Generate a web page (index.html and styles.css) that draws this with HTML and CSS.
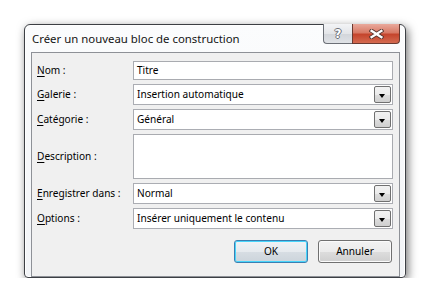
FILE: index.html
```html
<!DOCTYPE html>
<html lang="fr">
<head>
  <meta charset="UTF-8">
  <title>Créer un nouveau bloc de construction</title>
  <link rel="stylesheet" href="styles.css">
</head>
<body>
  <div class="window">
    <!-- Title bar -->
    <div class="titlebar">
      <span class="title">Créer un nouveau bloc de construction</span>
      <div class="caption-buttons">
        <div class="cap help">?</div>
        <div class="cap close">
          <svg width="15" height="10" viewBox="0 0 15 10">
            <path d="M2.5 1.8 L12.5 8.2 M12.5 1.8 L2.5 8.2" stroke="#55352f" stroke-width="4" stroke-linecap="square" fill="none"/>
            <path d="M2.5 1.8 L12.5 8.2 M12.5 1.8 L2.5 8.2" stroke="#ffffff" stroke-width="2.2" stroke-linecap="square" fill="none"/>
          </svg>
        </div>
      </div>
    </div>

    <!-- Client area -->
    <div class="client">
      <div class="form">
        <label class="row-1"><u>N</u>om :</label>
        <div class="edit row-1">Titre</div>

        <label class="row-2"><u>G</u>alerie :</label>
        <div class="combo row-2">Insertion automatique<span class="drop"></span></div>

        <label class="row-2"><u>C</u>atégorie :</label>
        <div class="combo row-2">Général<span class="drop"></span></div>

        <label class="row-3"><u>D</u>escription :</label>
        <div class="edit memo row-3"></div>

        <label class="row-2"><u>E</u>nregistrer dans :</label>
        <div class="combo row-2">Normal<span class="drop"></span></div>

        <label class="row-2"><u>O</u>ptions :</label>
        <div class="combo row-2">Insérer uniquement le contenu<span class="drop"></span></div>
      </div>

      <div class="buttons">
        <div class="btn default">OK</div>
        <div class="btn">Annuler</div>
      </div>
    </div>
  </div>
</body>
</html>
```

FILE: styles.css
```css
body {
  margin: 0;
  padding: 24px 0 0 24px;
  background: #ffffff;
  font-family: "Noto Sans", "Open Sans", sans-serif;
  font-size: 10.1px;
  color: #000000;
}
.window {
  width: 380px;
  height: 252px;
  border: 1px solid #3c3f44;
  border-radius: 6px 6px 4px 4px;
  background: linear-gradient(#fbfcfd, #f2f4f7);
  box-shadow: inset 0 0 0 1px #ffffff, 2px 3px 10px rgba(0, 0, 0, 0.55);
  display: flex;
  flex-direction: column;
}
.titlebar {
  height: 27px;
  display: flex;
  align-items: flex-start;
  justify-content: space-between;
  padding-left: 7px;
}
.title {
  margin-top: 7px;
  line-height: 14px;
  font-size: 11.4px;
  color: #141414;
}
.caption-buttons {
  display: flex;
  margin-top: -1px;
  margin-right: 5px;
}
.cap {
  height: 19px;
  border: 1px solid #6b6f76;
  border-top: none;
  display: flex;
  align-items: center;
  justify-content: center;
}
.help {
  width: 28px;
  border-right: none;
  border-radius: 0 0 0 4px;
  background: linear-gradient(#f3f4f6 0%, #e3e5e8 50%, #d2d5da 51%, #dfe2e6 100%);
  color: #ffffff;
  font-family: "DejaVu Sans", sans-serif;
  font-weight: bold;
  font-size: 12px;
  text-shadow: 1px 0 0 #6d7078, -1px 0 0 #6d7078, 0 1px 0 #6d7078, 0 -1px 0 #6d7078;
}
.close {
  width: 46px;
  border-radius: 0 0 4px 0;
  border-color: #6a3a31;
  background: linear-gradient(#e9a99c 0%, #d87a66 45%, #c5452d 55%, #d46a50 100%);
}
.client {
  margin: 0 5px 0 6px;
  height: 217px;
  border: 1px solid #8e9197;
  background: #f0f0f0;
  padding: 8px 6px 0 5px;
}
.form {
  display: grid;
  grid-template-columns: 96px 1fr;
  grid-template-rows: 19px 21px 21px 45px 21px 21px;
  row-gap: 4px;
}
.form label {
  display: flex;
  align-items: center;
  white-space: nowrap;
}
.form u {
  text-decoration-thickness: 1px;
  text-underline-offset: 2px;
}
.edit,
.combo {
  border: 1px solid #abadb3;
  background: #ffffff;
  padding: 0 3px;
  display: flex;
  align-items: center;
  position: relative;
  white-space: nowrap;
}
.edit {
  border-color: #a9abb0;
}
.memo {
  align-items: flex-start;
}
.drop {
  position: absolute;
  right: 1px;
  top: 1px;
  bottom: 1px;
  width: 15px;
  border: 1px solid #707070;
  border-radius: 2px;
  background: linear-gradient(#f2f2f2 0%, #ebebeb 50%, #dddddd 51%, #cfcfcf 100%);
}
.drop::after {
  content: "";
  position: absolute;
  left: 4px;
  top: 7px;
  border-left: 3.5px solid transparent;
  border-right: 3.5px solid transparent;
  border-top: 4px solid #000000;
}
.buttons {
  display: flex;
  justify-content: flex-end;
  gap: 10px;
  margin-top: 11px;
  padding-right: 1px;
}
.btn {
  width: 72px;
  height: 21px;
  border: 1px solid #707070;
  border-radius: 3px;
  background: linear-gradient(#f2f2f2 0%, #ebebeb 50%, #dddddd 51%, #cfcfcf 100%);
  box-shadow: inset 0 0 0 1px #fbfbfb;
  display: flex;
  align-items: center;
  justify-content: center;
}
.btn.default {
  border-color: #3c7fb1;
  box-shadow: inset 0 0 0 1px #48d5fb;
  background: linear-gradient(#f0f3f6 0%, #e6eaee 50%, #d7dde3 51%, #ccd4db 100%);
}
```
